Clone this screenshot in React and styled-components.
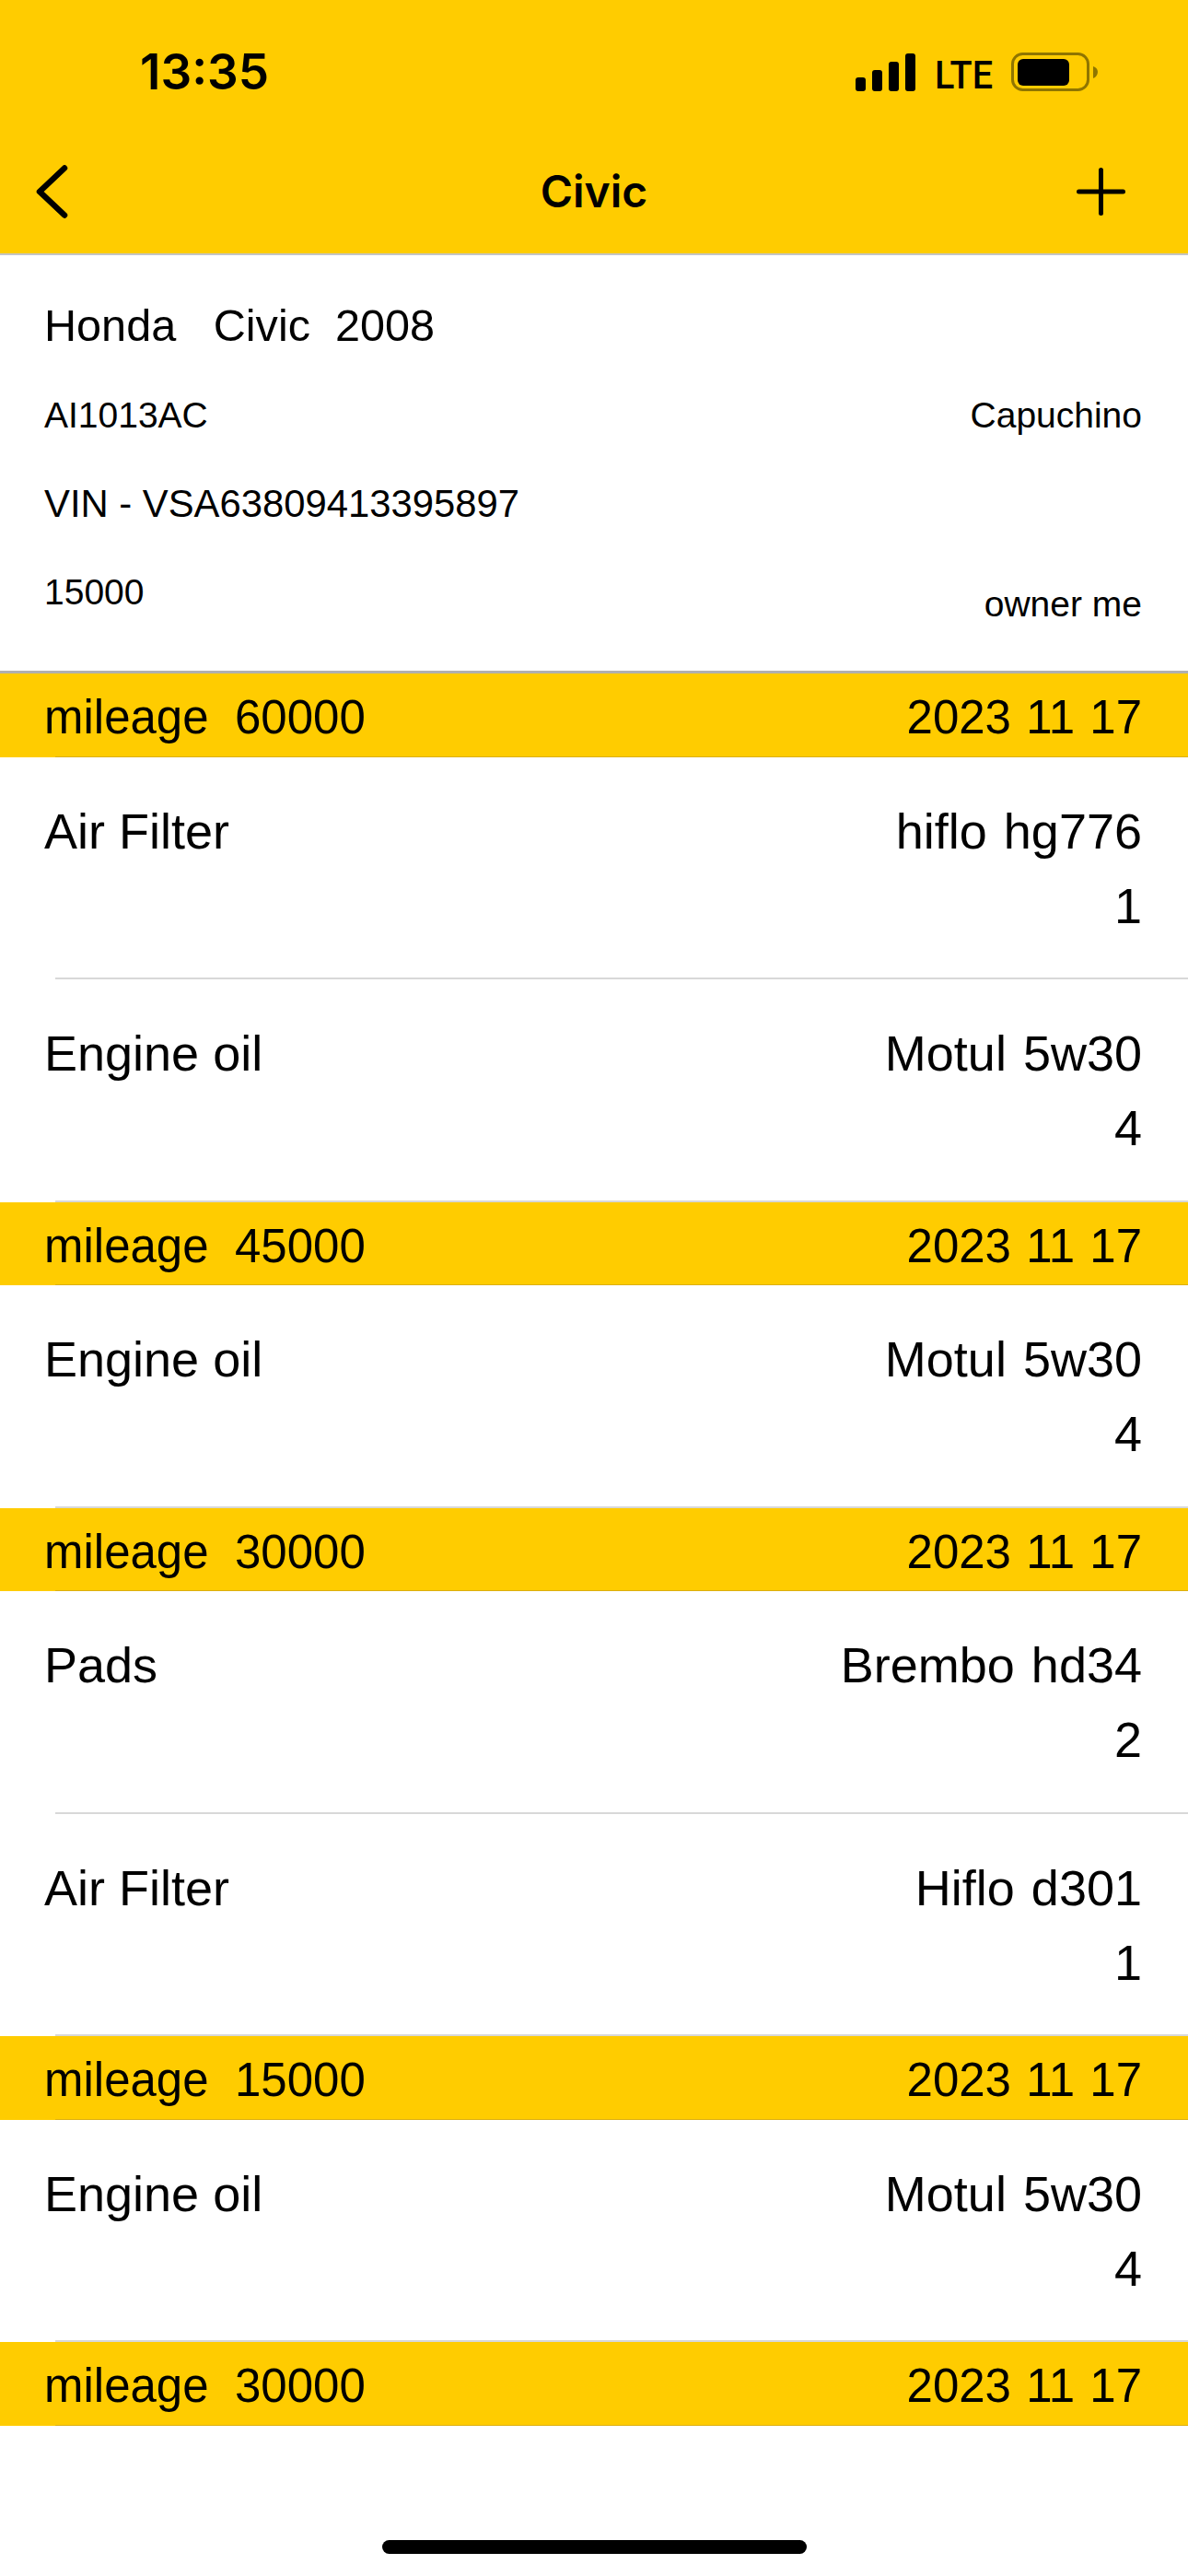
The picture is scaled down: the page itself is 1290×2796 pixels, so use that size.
import React from "react";
import styled, { createGlobalStyle } from "styled-components";

const YELLOW = "#FFCC00";

const sections = [
  { mileage: "60000", date: "2023 11 17", items: [
    { name: "Air Filter", brand: "hiflo hg776", qty: "1" },
    { name: "Engine oil", brand: "Motul 5w30", qty: "4" },
  ] },
  { mileage: "45000", date: "2023 11 17", items: [
    { name: "Engine oil", brand: "Motul 5w30", qty: "4" },
  ] },
  { mileage: "30000", date: "2023 11 17", items: [
    { name: "Pads", brand: "Brembo hd34", qty: "2" },
    { name: "Air Filter", brand: "Hiflo d301", qty: "1" },
  ] },
  { mileage: "15000", date: "2023 11 17", items: [
    { name: "Engine oil", brand: "Motul 5w30", qty: "4" },
  ] },
  { mileage: "30000", date: "2023 11 17", items: [] },
];

const App = () => (
  <>
    <GlobalStyle />
    <Screen>
      <TopBar>
        <StatusBar>
          <Clock>13:35</Clock>
          <StatusIcons>
            <svg width="65" height="41" viewBox="0 0 65 41">
              <rect x="0" y="26" width="11" height="15" rx="3" fill="#000" />
              <rect x="18" y="18" width="11" height="23" rx="3" fill="#000" />
              <rect x="36" y="9" width="11" height="32" rx="3" fill="#000" />
              <rect x="54" y="0" width="11" height="41" rx="3" fill="#000" />
            </svg>
            <Network>LTE</Network>
            <svg width="94" height="42" viewBox="0 0 94 42">
              <rect x="1.5" y="1.5" width="82" height="39" rx="11" fill="none" stroke="#8f7500" strokeWidth="3" />
              <rect x="7" y="7" width="56" height="29" rx="6" fill="#000" />
              <path d="M89 15 C92 16 94 18 94 21 C94 24 92 27 89 28 Z" fill="#8f7500" />
            </svg>
          </StatusIcons>
        </StatusBar>
        <NavBar>
          <BackIcon width="38" height="62" viewBox="0 0 38 62">
            <path d="M33 5.5 L6 31 L33 56.5" fill="none" stroke="#000" strokeWidth="6.5" strokeLinecap="round" strokeLinejoin="round" />
          </BackIcon>
          <NavTitle>Civic</NavTitle>
          <PlusIcon width="53" height="52" viewBox="0 0 53 52">
            <path d="M26.5 2.5 V49.5" stroke="#000" strokeWidth="5" strokeLinecap="round" />
            <path d="M2.5 26 H50.5" stroke="#000" strokeWidth="5" strokeLinecap="round" />
          </PlusIcon>
        </NavBar>
      </TopBar>

      <CarCard>
        <CarTitle>Honda&nbsp;&nbsp; Civic&nbsp; 2008</CarTitle>
        <CarLine>
          <span>AI1013AC</span>
          <span>Capuchino</span>
        </CarLine>
        <CarLine $large>
          <span>VIN - VSA63809413395897</span>
        </CarLine>
        <CarLine>
          <span>15000</span>
          <Owner>owner me</Owner>
        </CarLine>
      </CarCard>

      <section>
        {sections.map((section, i) => (
          <section key={i}>
            <MileageBand>
              <span>mileage&nbsp; {section.mileage}</span>
              <BandDate>{section.date}</BandDate>
            </MileageBand>
            {section.items.map((item, j) => (
              <PartRow key={j}>
                <span>{item.name}</span>
                <PartInfo>
                  <span>{item.brand}</span>
                  <span>{item.qty}</span>
                </PartInfo>
              </PartRow>
            ))}
          </section>
        ))}
      </section>

      <HomeArea>
        <HomeBar />
      </HomeArea>
    </Screen>
  </>
);

const GlobalStyle = createGlobalStyle`
  html, body {
    margin: 0;
    padding: 0;
    background: #fff;
  }
  body {
    font-family: "Liberation Sans", Arial, sans-serif;
    color: #000;
  }
`;

const Screen = styled.div`
  width: 1290px;
  height: 2796px;
  display: flex;
  flex-direction: column;
  overflow: hidden;
  background: #fff;
`;

const TopBar = styled.header`
  height: 277px;
  box-sizing: border-box;
  flex-shrink: 0;
  background: ${YELLOW};
  border-bottom: 2px solid #c4c4c4;
`;

const StatusBar = styled.div`
  height: 132px;
  padding: 24px 98px 0 152px;
  box-sizing: border-box;
  display: flex;
  justify-content: space-between;
  align-items: center;
`;

const Clock = styled.div`
  font-family: Inter, "Liberation Sans", sans-serif;
  font-size: 53px;
  font-weight: 600;
`;

const StatusIcons = styled.div`
  display: flex;
  align-items: flex-end;
  gap: 21px;
`;

const Network = styled.div`
  font-family: Roboto, sans-serif;
  font-size: 43px;
  line-height: 36px;
  font-weight: 500;
  width: 62px;
  transform: scaleX(0.92);
  transform-origin: left center;
`;

const NavBar = styled.div`
  height: 143px;
  padding: 8px 68px 0;
  box-sizing: border-box;
  display: grid;
  grid-template-columns: 1fr auto 1fr;
  align-items: center;
`;

const BackIcon = styled.svg`
  margin-left: -31px;
`;

const NavTitle = styled.div`
  font-family: Inter, "Liberation Sans", sans-serif;
  font-size: 48px;
  font-weight: 600;
`;

const PlusIcon = styled.svg`
  justify-self: end;
`;

const CarCard = styled.div`
  height: 454px;
  flex-shrink: 0;
  box-sizing: border-box;
  padding: 48px 50px 0 48px;
  border-bottom: 3px solid #b0b0b0;
`;

const CarTitle = styled.div`
  font-size: 48.6px;
  line-height: 56px;
  height: 103px;
`;

const CarLine = styled.div`
  display: flex;
  justify-content: space-between;
  align-items: flex-start;
  font-size: ${(p) => (p.$large ? "41.8px" : "39px")};
  line-height: 46px;
  height: 96px;
`;

const Owner = styled.span`
  margin-top: 13px;
`;

const MileageBand = styled.div`
  position: relative;
  height: 90.5px;
  box-sizing: border-box;
  padding: 5px 50px 0 48px;
  display: flex;
  justify-content: space-between;
  align-items: center;
  background: ${YELLOW};
  font-size: 51px;

  &::after {
    content: "";
    position: absolute;
    left: 60px;
    right: 0;
    bottom: 0;
    height: 1px;
    background: #dcaf10;
  }
`;

const BandDate = styled.span`
  word-spacing: 2px;
`;

const PartRow = styled.div`
  position: relative;
  height: 241.5px;
  box-sizing: border-box;
  padding: 50px 50px 0 48px;
  display: flex;
  justify-content: space-between;
  font-size: 54px;
  line-height: 60px;

  &::after {
    content: "";
    position: absolute;
    left: 60px;
    right: 0;
    bottom: 0;
    height: 2px;
    background: #d8d8d8;
  }
`;

const PartInfo = styled.div`
  display: flex;
  flex-direction: column;
  align-items: flex-end;
  gap: 21px;
  word-spacing: 3px;
`;

const HomeArea = styled.div`
  margin-top: auto;
  padding-bottom: 24px;
  display: flex;
  justify-content: center;
`;

const HomeBar = styled.div`
  width: 461px;
  height: 15px;
  border-radius: 8px;
  background: #000;
`;

export default App;
